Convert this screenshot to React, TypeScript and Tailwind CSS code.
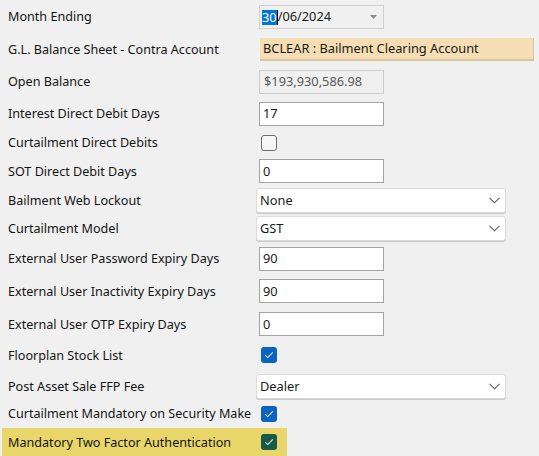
import React from "react";

const font = { fontFamily: '"Noto Sans", "Open Sans", sans-serif' };

function Chevron() {
  return (
    <svg width="11" height="7" viewBox="0 0 11 7" className="shrink-0">
      <path d="M0.5 0.8 L5.5 5.8 L10.5 0.8" fill="none" stroke="#5f5f5f" strokeWidth="1.1" />
    </svg>
  );
}

function Check({ color }: { color: string }) {
  return (
    <div className={`w-[16px] h-[16px] rounded-[3px] flex items-center justify-center ${color}`}>
      <svg width="10" height="8" viewBox="0 0 10 8">
        <path d="M1.2 4.2 L3.8 6.6 L8.8 1.4" fill="none" stroke="#dfe8f2" strokeWidth="1.1" />
      </svg>
    </div>
  );
}

function Empty() {
  return <div className="w-[16px] h-[16px] rounded-[3px] border border-[#6e6e6e] bg-[#f6f6f6]" />;
}

function TextBox({ value }: { value: string }) {
  return (
    <div className="w-[125px] h-[24px] ml-[3px] bg-white border border-[#a3a3a3] flex items-center pl-[3px] pt-[1px] text-[12.8px] text-[#1a1a1a]">
      {value}
    </div>
  );
}

function Select({ value }: { value: string }) {
  return (
    <div className="w-[250px] h-[25px] bg-white border border-[#dcdcdc] rounded-[3px] shadow-[0_1px_0_#c8c8c8] flex items-center justify-between pl-[3px] pr-[5px] text-[12.8px] text-[#1a1a1a]">
      <span className="pt-[1px]">{value}</span>
      <Chevron />
    </div>
  );
}

function Row({ h, label, children }: { h: string; label: string; children: React.ReactNode }) {
  return (
    <div className={`flex items-center ${h}`}>
      <div className="w-[256px] shrink-0 whitespace-nowrap text-[12.6px] text-[#141414] pl-[8px] pt-[2px]">{label}</div>
      <div className="flex items-center">{children}</div>
    </div>
  );
}

export default function App() {
  return (
    <div className="w-[539px] h-[456px] bg-[#f0f0f0] overflow-hidden" style={font}>
      <Row h="h-[33px]" label="Month Ending">
        <div className="w-[125px] h-[24px] ml-[3px] border border-[#cfcfcf] bg-[#f0f0f0] flex items-center pl-[2px] pr-[6px] pt-[1px] text-[12.8px] text-[#1a1a1a]">
          <span className="bg-[#0078d7] text-white leading-[15px]">30</span>
          <span className="w-px h-[15px] bg-black" />
          <span>/06/2024</span>
          <span className="ml-auto">
            <svg width="7" height="4" viewBox="0 0 7 4">
              <path d="M0 0 L7 0 L3.5 4 Z" fill="#8a8a8a" />
            </svg>
          </span>
        </div>
      </Row>
      <Row h="h-[32px]" label="G.L. Balance Sheet - Contra Account">
        <div className="w-[274px] h-[23px] ml-[4px] bg-[#f5deb3] border-b-2 border-r border-[#d9c49c] flex items-center pl-[3px] pt-[1px] text-[12.8px] text-[#1a1a1a]">
          BCLEAR : Bailment Clearing Account
        </div>
      </Row>
      <Row h="h-[33px]" label="Open Balance">
        <div className="w-[125px] h-[24px] ml-[3px] bg-[#f0f0f0] border border-[#cccccc] flex items-center pl-[4px] pt-[1px] text-[12.8px] text-[#5a5a5a]">
          $193,930,586.98
        </div>
      </Row>
      <Row h="h-[31px]" label="Interest Direct Debit Days">
        <TextBox value="17" />
      </Row>
      <Row h="h-[27px]" label="Curtailment Direct Debits">
        <div className="ml-[5px]"><Empty /></div>
      </Row>
      <Row h="h-[30px]" label="SOT Direct Debit Days">
        <TextBox value="0" />
      </Row>
      <Row h="h-[29px]" label="Bailment Web Lockout">
        <Select value="None" />
      </Row>
      <Row h="h-[27px]" label="Curtailment Model">
        <Select value="GST" />
      </Row>
      <Row h="h-[33px]" label="External User Password Expiry Days">
        <TextBox value="90" />
      </Row>
      <Row h="h-[32px]" label="External User Inactivity Expiry Days">
        <TextBox value="90" />
      </Row>
      <Row h="h-[34px]" label="External User OTP Expiry Days">
        <TextBox value="0" />
      </Row>
      <Row h="h-[28px]" label="Floorplan Stock List">
        <div className="ml-[5px]"><Check color="bg-[#0a63bd]" /></div>
      </Row>
      <Row h="h-[34px]" label="Post Asset Sale FFP Fee">
        <Select value="Dealer" />
      </Row>
      <Row h="h-[21px]" label="Curtailment Mandatory on Security Make">
        <div className="ml-[5px]"><Check color="bg-[#0a63bd]" /></div>
      </Row>
      <div className="h-[4px]" />
      <div className="ml-[2px] w-[285px] h-[28px] bg-[#e8d66b] flex items-center">
        <div className="w-[254px] shrink-0 whitespace-nowrap text-[12.6px] text-[#141414] pl-[6px] pt-[2px]">Mandatory Two Factor Authentication</div>
        <div className="ml-[5px]"><Check color="bg-[#175a48]" /></div>
      </div>
    </div>
  );
}
